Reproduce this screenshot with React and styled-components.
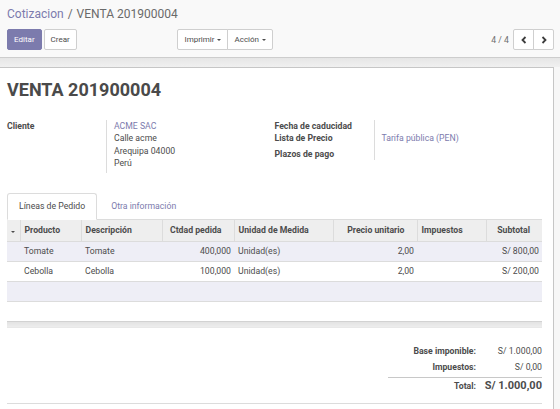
import React from 'react';
import styled, { createGlobalStyle } from 'styled-components';

const Global = createGlobalStyle`
  html, body { margin: 0; padding: 0; }
  body {
    font-family: Roboto, "Noto Sans", "Liberation Sans", sans-serif;
    background: #f9f9f9;
    color: #4c4c4c;
    font-size: 8.7px;
  }
  * { box-sizing: border-box; }
`;

const Page = styled.div`
  width: 560px;
  height: 409px;
  overflow: hidden;
  display: flex;
  flex-direction: column;
`;

const ControlPanel = styled.div`
  background: #f9f9f9;
  border-bottom: 1px solid #cdcdcd;
  padding: 5px 6px 7px 7px;
`;

const Breadcrumb = styled.div`
  font-size: 12px;
  line-height: 18px;
  display: flex;
  gap: 4px;
`;

const Crumb = styled.span`
  color: ${p => (p.$active ? '#6a6a6a' : '#7c7bad')};
`;

const CpRow = styled.div`
  display: flex;
  align-items: center;
  margin-top: 6px;
  height: 21px;
`;

const CpLeft = styled.div`
  width: 266px;
  display: flex;
  justify-content: space-between;
`;

const CpRight = styled.div`
  flex: 1;
  display: flex;
  justify-content: flex-end;
  align-items: center;
`;

const ButtonRow = styled.div`
  display: flex;
  gap: ${p => p.$gap || 0}px;
`;

const Button = styled.button`
  height: 21px;
  padding: 0 6px;
  font-family: inherit;
  font-size: 8px;
  border-radius: 2px;
  border: 1px solid ${p => (p.$primary ? '#7c7bad' : '#cfcfcf')};
  background: ${p => (p.$primary ? '#7c7bad' : '#fff')};
  color: ${p => (p.$primary ? '#fff' : '#4c4c4c')};
  display: flex;
  align-items: center;
  gap: 3px;
  cursor: pointer;
`;

const JoinedGroup = styled.div`
  display: flex;
  & > button { border-radius: 0; }
  & > button:first-child { border-radius: 2px 0 0 2px; }
  & > button:last-child { border-radius: 0 2px 2px 0; }
  & > button + button { margin-left: -1px; }
`;

const Caret = styled.span`
  display: inline-block;
  width: 0;
  height: 0;
  border-left: 2.5px solid transparent;
  border-right: 2.5px solid transparent;
  border-top: 2.5px solid #4c4c4c;
`;

const PagerValue = styled.span`
  color: #6e6e6e;
  margin-right: 4px;
  font-size: 8.7px;
`;

const PagerButton = styled.button`
  width: 21px;
  height: 21px;
  padding: 0;
  background: #fff;
  border: 1px solid #cfcfcf;
  display: flex;
  align-items: center;
  justify-content: center;
`;

const SheetBg = styled.div`
  flex: 1;
  background: linear-gradient(to bottom, #e6e6e6 0, #f0f0f0 9px, #f7f7f7 9px);
  padding: 9px 6px 0 0;
  display: flex;
  flex-direction: column;
`;

const Sheet = styled.div`
  flex: 1;
  background: #fff;
  border: 1px solid #c6c6c6;
  border-left: none;
  border-bottom: none;
  padding: 11px 11px 0 7px;
`;

const Title = styled.h1`
  margin: 0;
  font-size: 18px;
  line-height: 22px;
  font-weight: 700;
  color: #4a4a4a;
`;

const Groups = styled.div`
  display: grid;
  grid-template-columns: 1fr 1fr;
  margin-top: 19px;
`;

const Group = styled.div`
  display: grid;
  grid-template-columns: 99px 1fr;
  align-content: start;
`;

const Label = styled.div`
  font-weight: 700;
  line-height: 12px;
  padding-top: ${p => p.$pt || 0}px;
`;

const Value = styled.div`
  border-left: 1px solid #dcdcdc;
  padding-left: 7px;
  line-height: 12.3px;
  padding-bottom: ${p => p.$pb || 0}px;
`;

const Link = styled.span`
  color: #7c7bad;
`;

const Tabs = styled.div`
  display: flex;
  margin-top: 20px;
  border-bottom: 1px solid #dcdcdc;
`;

const Tab = styled.div`
  padding: 6px 11px 7px;
  line-height: 12px;
  margin-bottom: -1px;
  margin-right: 2px;
  border: 1px solid ${p => (p.$active ? '#dcdcdc' : 'transparent')};
  border-bottom-color: ${p => (p.$active ? '#fff' : 'transparent')};
  border-radius: 3px 3px 0 0;
  background: ${p => (p.$active ? '#fff' : 'transparent')};
  color: ${p => (p.$active ? '#4c4c4c' : '#7c7bad')};
`;

const Table = styled.table`
  width: 100%;
  border-collapse: collapse;
  table-layout: fixed;
  font-size: 8.7px;
`;

const Th = styled.th`
  height: 21px;
  padding: 0 ${p => (p.$num ? '12px' : '4px')} 0 4px;
  background: #eeeeee;
  font-weight: 700;
  text-align: ${p => (p.$num ? 'right' : 'left')};
  border-left: 1px solid #dcdcdc;
  border-bottom: 1px solid #dcdcdc;
  white-space: nowrap;
  overflow: hidden;
  &:first-child { border-left: none; text-align: center; padding: 0; }
`;

const Tr = styled.tr`
  background: ${p => (p.$odd ? '#eeeef6' : '#fff')};
`;

const Td = styled.td`
  height: 20px;
  padding: 0 ${p => (p.$num ? '3px' : '4px')} 0 4px;
  text-align: ${p => (p.$num ? 'right' : 'left')};
  border-top: 1px solid #dcdcdc;
  white-space: nowrap;
`;

const FootCell = styled.td`
  height: 7px;
  padding: 0;
  background: linear-gradient(to bottom, #e2e2e2, #eeeeee);
  border-top: 1px solid #d2d2d2;
`;

const TotalsWrap = styled.div`
  display: flex;
  justify-content: flex-end;
  margin-top: 15px;
`;

const Totals = styled.div`
  display: flex;
  flex-direction: column;
`;

const TotalLine = styled.div`
  display: grid;
  grid-template-columns: 88px 66px;
  line-height: 16px;
  ${p => p.$grand && `
    border-top: 1px solid #c8c8c8;
    margin-top: 2px;
  `}
`;

const TLabel = styled.div`
  font-weight: 700;
  text-align: right;
`;

const TValue = styled.div`
  text-align: right;
  font-weight: ${p => (p.$grand ? 700 : 400)};
  font-size: ${p => (p.$grand ? '11px' : '8.7px')};
`;

const FooterLine = styled.div`
  margin-top: 9px;
  border-top: 1px solid #dcdcdc;
`;

const Chevron = ({ dir }) => (
  <svg width="8" height="8" viewBox="0 0 8 8">
    <polyline
      points={dir === 'left' ? '5.5,1 2.5,4 5.5,7' : '2.5,1 5.5,4 2.5,7'}
      fill="none"
      stroke="#3c3c3c"
      strokeWidth="1.8"
    />
  </svg>
);

const lines = [
  { p: 'Tomate', d: 'Tomate', q: '400,000', u: 'Unidad(es)', pr: '2,00', s: 'S/ 800,00' },
  { p: 'Cebolla', d: 'Cebolla', q: '100,000', u: 'Unidad(es)', pr: '2,00', s: 'S/ 200,00' },
];

export default function App() {
  return (
    <Page>
      <Global />
      <ControlPanel>
        <Breadcrumb>
          <Crumb>Cotizacion</Crumb>
          <Crumb $active>/</Crumb>
          <Crumb $active>VENTA 201900004</Crumb>
        </Breadcrumb>
        <CpRow>
          <CpLeft>
            <ButtonRow $gap={2}>
              <Button $primary>Editar</Button>
              <Button>Crear</Button>
            </ButtonRow>
            <JoinedGroup>
              <Button>Imprimir <Caret /></Button>
              <Button>Acción <Caret /></Button>
            </JoinedGroup>
          </CpLeft>
          <CpRight>
            <PagerValue>4 / 4</PagerValue>
            <JoinedGroup>
              <PagerButton><Chevron dir="left" /></PagerButton>
              <PagerButton><Chevron dir="right" /></PagerButton>
            </JoinedGroup>
          </CpRight>
        </CpRow>
      </ControlPanel>
      <SheetBg>
        <Sheet>
          <Title>VENTA 201900004</Title>
          <Groups>
            <Group>
              <Label>Cliente</Label>
              <Value $pb={4}>
                <Link>ACME SAC</Link>
                <div>Calle acme</div>
                <div>Arequipa 04000</div>
                <div>Perú</div>
              </Value>
            </Group>
            <Group>
              <Label>Fecha de caducidad</Label>
              <Value />
              <Label>Lista de Precio</Label>
              <Value><Link>Tarifa pública (PEN)</Link></Value>
              <Label $pt={4}>Plazos de pago</Label>
              <Value />
            </Group>
          </Groups>
          <Tabs>
            <Tab $active>Líneas de Pedido</Tab>
            <Tab>Otra información</Tab>
          </Tabs>
          <Table>
            <colgroup>
              <col style={{ width: 13 }} />
              <col style={{ width: 61 }} />
              <col style={{ width: 81 }} />
              <col style={{ width: 72 }} />
              <col style={{ width: 99 }} />
              <col style={{ width: 84 }} />
              <col style={{ width: 69 }} />
              <col style={{ width: 56 }} />
            </colgroup>
            <thead>
              <tr>
                <Th><Caret /></Th>
                <Th>Producto</Th>
                <Th>Descripción</Th>
                <Th $num>Ctdad pedida</Th>
                <Th>Unidad de Medida</Th>
                <Th $num>Precio unitario</Th>
                <Th>Impuestos</Th>
                <Th $num>Subtotal</Th>
              </tr>
            </thead>
            <tbody>
              {lines.map((l, i) => (
                <Tr key={l.p} $odd={i % 2 === 0}>
                  <Td />
                  <Td>{l.p}</Td>
                  <Td>{l.d}</Td>
                  <Td $num>{l.q}</Td>
                  <Td>{l.u}</Td>
                  <Td $num>{l.pr}</Td>
                  <Td />
                  <Td $num>{l.s}</Td>
                </Tr>
              ))}
              <Tr $odd><Td colSpan={8} /></Tr>
              <Tr><Td colSpan={8} /></Tr>
            </tbody>
            <tfoot>
              <tr><FootCell colSpan={8} /></tr>
            </tfoot>
          </Table>
          <TotalsWrap>
            <Totals>
              <TotalLine>
                <TLabel>Base imponible:</TLabel>
                <TValue>S/ 1.000,00</TValue>
              </TotalLine>
              <TotalLine>
                <TLabel>Impuestos:</TLabel>
                <TValue>S/ 0,00</TValue>
              </TotalLine>
              <TotalLine $grand>
                <TLabel>Total:</TLabel>
                <TValue $grand>S/ 1.000,00</TValue>
              </TotalLine>
            </Totals>
          </TotalsWrap>
          <FooterLine />
        </Sheet>
      </SheetBg>
    </Page>
  );
}
